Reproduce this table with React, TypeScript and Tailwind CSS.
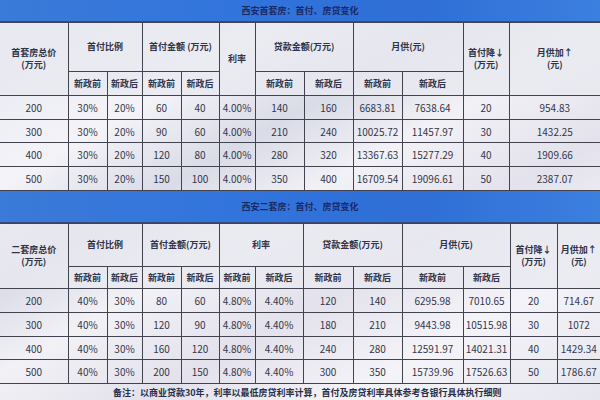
import React from "react";

const font = { fontFamily: '"Noto Sans CJK SC", "Noto Sans", sans-serif' };

const t1Widths = [68, 39, 35, 39, 38, 36, 49, 49, 49, 61, 46, 91];
const t2Widths = [68, 39, 35, 39, 38, 36, 48, 50, 49, 61, 47, 47, 43];

const t1Rows = [
  ["200", "30%", "20%", "60", "40", "4.00%", "140", "160", "6683.81", "7638.64", "20", "954.83"],
  ["300", "30%", "20%", "90", "60", "4.00%", "210", "240", "10025.72", "11457.97", "30", "1432.25"],
  ["400", "30%", "20%", "120", "80", "4.00%", "280", "320", "13367.63", "15277.29", "40", "1909.66"],
  ["500", "30%", "20%", "150", "100", "4.00%", "350", "400", "16709.54", "19096.61", "50", "2387.07"],
];
const t1H = [24, 23, 24, 24];

const t2Rows = [
  ["200", "40%", "30%", "80", "60", "4.80%", "4.40%", "120", "140", "6295.98", "7010.65", "20", "714.67"],
  ["300", "40%", "30%", "120", "90", "4.80%", "4.40%", "180", "210", "9443.98", "10515.98", "30", "1072"],
  ["400", "40%", "30%", "160", "120", "4.80%", "4.40%", "240", "280", "12591.97", "14021.31", "40", "1429.34"],
  ["500", "40%", "30%", "200", "150", "4.80%", "4.40%", "300", "350", "15739.96", "17526.63", "50", "1786.67"],
];
const t2H = [24, 24, 23, 24];

const th = "border border-[#43434f] text-center align-middle text-[9px] font-semibold text-[#2f3448] leading-[12px] p-0";
const td = "border border-[#43434f] text-center align-middle text-[10px] text-[#33374a] p-0";

function Band({ title, h }: { title: string; h: number }) {
  return (
    <div
      className="flex items-center justify-center bg-[linear-gradient(90deg,#3a7ad8,#3174dc_40%,#2f6fd6_70%,#3b7fdf)] border-b border-[#3a4a70]"
      style={{ height: h }}
    >
      <span className="text-[9px] font-bold text-[#1b2a66]">{title}</span>
    </div>
  );
}

export default function App() {
  return (
    <div
      className="w-[600px] h-[400px] overflow-hidden bg-[linear-gradient(150deg,#e6e8f2_0%,#f3f3f8_25%,#d9dbe6_38%,#f2f1f6_50%,#e3e2ec_65%,#f4f3f8_80%,#e6e6ef_100%)]"
      style={font}
    >
      <Band title="西安首套房：首付、房贷变化" h={22} />
      <table className="table-fixed border-collapse w-[600px]">
        <colgroup>
          {t1Widths.map((w, i) => (
            <col key={i} style={{ width: w }} />
          ))}
        </colgroup>
        <tbody>
          <tr className="h-[49px] bg-[#e9e8f0]/80">
            <td rowSpan={2} className={th + " border-l-0"}>首套房总价<br />(万元)</td>
            <td colSpan={2} className={th}>首付比例</td>
            <td colSpan={2} className={th}>首付金额 (万元)</td>
            <td rowSpan={2} className={th}>利率</td>
            <td colSpan={2} className={th}>贷款金额(万元)</td>
            <td colSpan={2} className={th}>月供(元)</td>
            <td rowSpan={2} className={th}>首付降↓<br />(万元)</td>
            <td rowSpan={2} className={th + " border-r-0"}>月供加↑<br />(元)</td>
          </tr>
          <tr className="h-[24px] bg-[#e9e8f0]/80">
            {["新政前", "新政后", "新政前", "新政后", "新政前", "新政后", "新政前", "新政后"].map((s, i) => (
              <td key={i} className={th}>{s}</td>
            ))}
          </tr>
          {t1Rows.map((r, ri) => (
            <tr key={ri} style={{ height: t1H[ri] }}>
              {r.map((c, ci) => (
                <td key={ci} className={td + (ci === 0 ? " border-l-0" : "") + (ci === r.length - 1 ? " border-r-0" : "")}>
                  {c}
                </td>
              ))}
            </tr>
          ))}
        </tbody>
      </table>
      <Band title="西安二套房：首付、房贷变化" h={32} />
      <table className="table-fixed border-collapse w-[600px]">
        <colgroup>
          {t2Widths.map((w, i) => (
            <col key={i} style={{ width: w }} />
          ))}
        </colgroup>
        <tbody>
          <tr className="h-[43px] bg-[#e9e8f0]/80">
            <td rowSpan={2} className={th + " border-l-0"}>二套房总价<br />(万元)</td>
            <td colSpan={2} className={th}>首付比例</td>
            <td colSpan={2} className={th}>首付金额(万元)</td>
            <td colSpan={2} className={th}>利率</td>
            <td colSpan={2} className={th}>贷款金额(万元)</td>
            <td colSpan={2} className={th}>月供(元)</td>
            <td rowSpan={2} className={th}>首付降↓<br />(万元)</td>
            <td rowSpan={2} className={th + " border-r-0"}>月供加↑<br />(元)</td>
          </tr>
          <tr className="h-[22px] bg-[#e9e8f0]/80">
            {["新政前", "新政后", "新政前", "新政后", "新政前", "新政后", "新政前", "新政后", "新政前", "新政后"].map((s, i) => (
              <td key={i} className={th}>{s}</td>
            ))}
          </tr>
          {t2Rows.map((r, ri) => (
            <tr key={ri} style={{ height: t2H[ri] }}>
              {r.map((c, ci) => (
                <td key={ci} className={td + (ci === 0 ? " border-l-0" : "") + (ci === r.length - 1 ? " border-r-0" : "")}>
                  {c}
                </td>
              ))}
            </tr>
          ))}
        </tbody>
      </table>
      <div className="h-[18px] flex items-center pl-[113px] text-[9px] font-bold text-[#2a2f45]">
        备注：以商业贷款30年，利率以最低房贷利率计算，首付及房贷利率具体参考各银行具体执行细则
      </div>
    </div>
  );
}
